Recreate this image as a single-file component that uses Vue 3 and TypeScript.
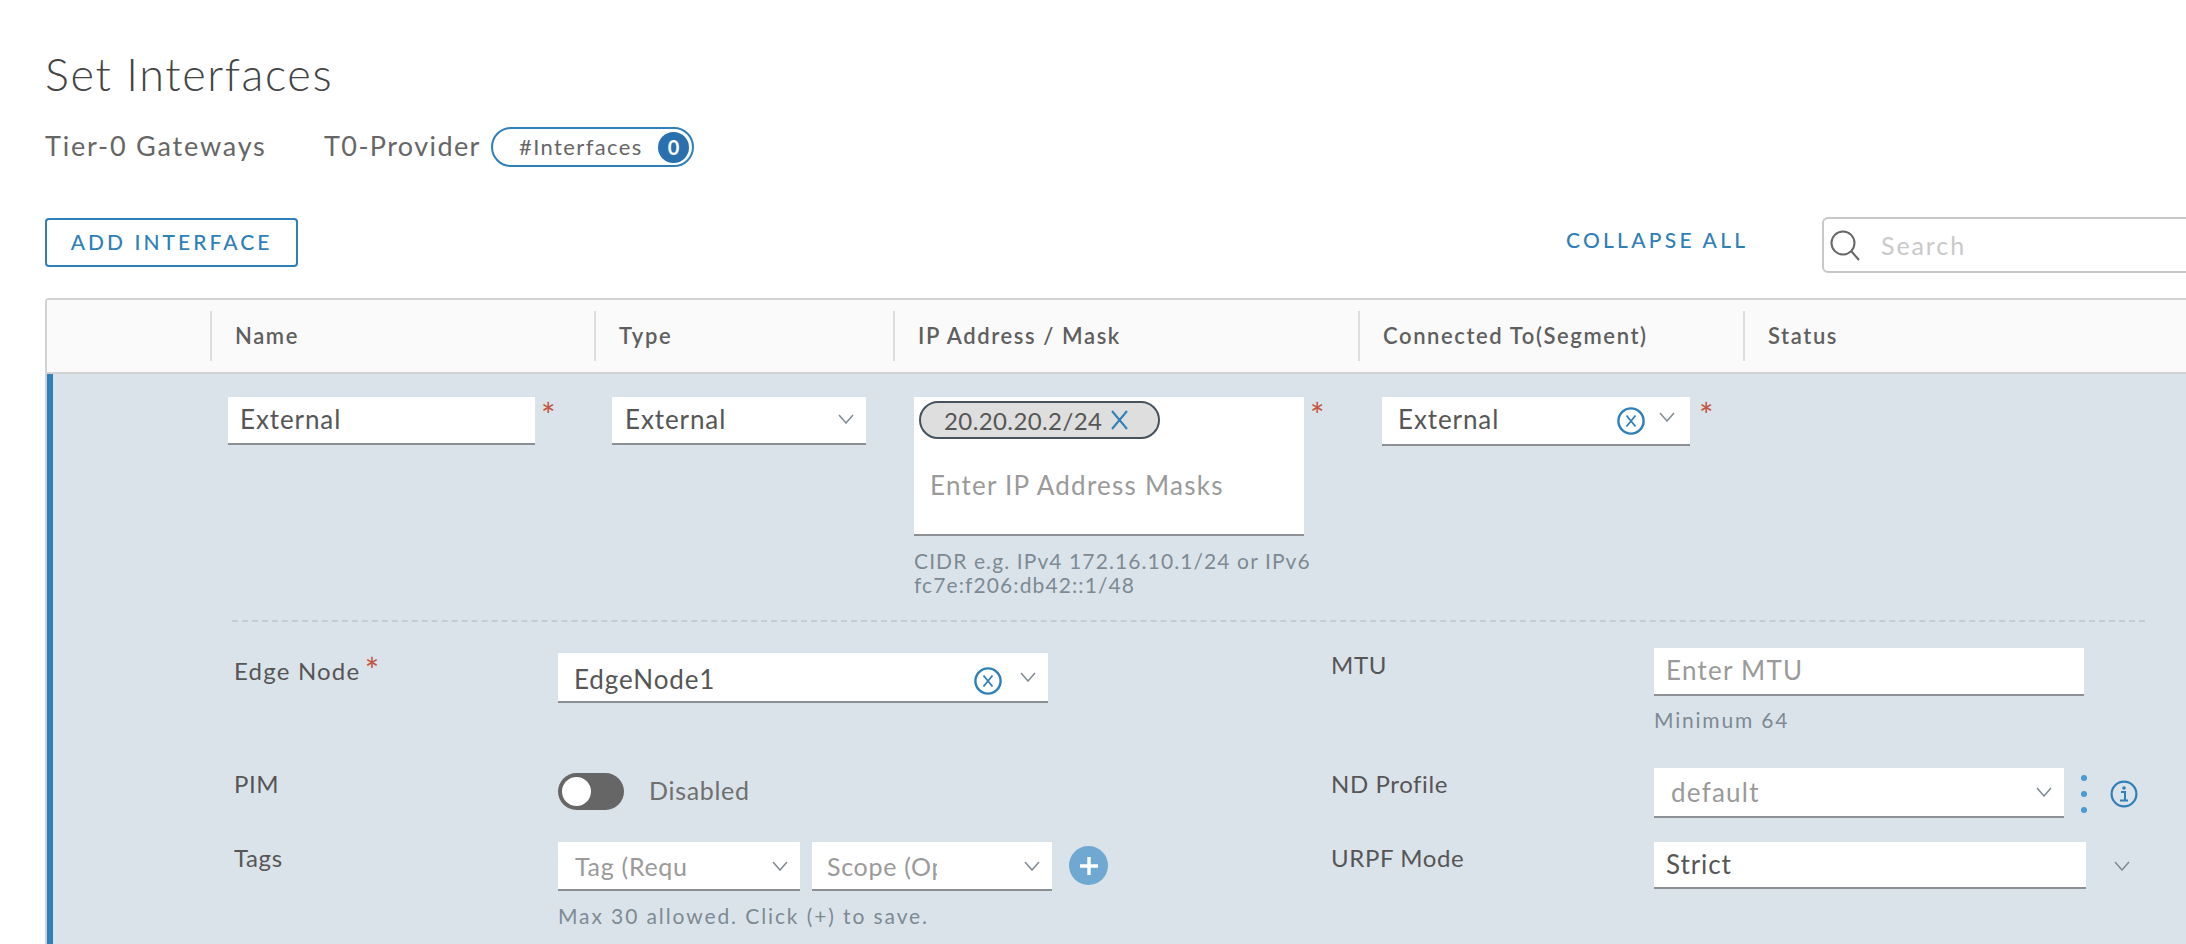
<script setup lang="ts">
const columns = ['', 'Name', 'Type', 'IP Address / Mask', 'Connected To(Segment)', 'Status']
</script>

<template>
  <div class="page">
    <svg class="sprites" width="0" height="0" aria-hidden="true">
      <symbol id="chev" viewBox="0 0 16 10">
        <path d="M1 1L8 9L15 1" fill="none" stroke="#7f8a92" stroke-width="1.5" />
      </symbol>
      <symbol id="clear" viewBox="0 0 28 28">
        <circle cx="14" cy="14" r="12.6" fill="none" stroke="#2f7fb8" stroke-width="2.4" />
        <path d="M9.5 8.5L18.5 19.5M18.5 8.5L9.5 19.5" fill="none" stroke="#2f7fb8" stroke-width="1.8" />
      </symbol>
    </svg>

    <h1 class="title">Set Interfaces</h1>

    <div class="crumbs">
      <span class="crumb-root">Tier-0 Gateways</span>
      <span class="crumb-name">T0-Provider</span>
      <span class="pill">
        <span class="pill-text">#Interfaces</span>
        <span class="pill-count">0</span>
      </span>
    </div>

    <div class="toolbar">
      <button class="btn-add">ADD INTERFACE</button>
      <a class="collapse">COLLAPSE ALL</a>
      <div class="search">
        <svg width="32" height="32" viewBox="0 0 32 32">
          <circle cx="14" cy="14" r="11.5" fill="none" stroke="#666" stroke-width="2" />
          <path d="M22.5 22.5L30 31" fill="none" stroke="#666" stroke-width="2" />
        </svg>
        <span class="search-text">Search</span>
      </div>
    </div>

    <div class="table">
      <div class="thead cols">
        <div v-for="col in columns" :key="col" class="th">
          <span>{{ col }}</span>
        </div>
      </div>

      <div class="row">
        <div class="cols row-main">
          <div></div>
          <div class="cell cell-name">
            <div class="field w-name"><span class="val">External</span></div>
            <span class="star">*</span>
          </div>
          <div class="cell cell-type">
            <div class="field w-type">
              <span class="val">External</span>
              <svg class="chev" width="16" height="10"><use href="#chev" /></svg>
            </div>
          </div>
          <div class="cell cell-ip">
            <div class="ip-wrap">
              <div class="ip-box">
                <span class="chip">
                  20.20.20.2/24
                  <svg class="chip-x" width="17" height="20" viewBox="0 0 17 20">
                    <path d="M1 1L16 19M16 1L1 19" fill="none" stroke="#2f7fb8" stroke-width="2" />
                  </svg>
                </span>
                <span class="ph ip-ph">Enter IP Address Masks</span>
              </div>
              <p class="hint ip-hint">CIDR e.g. IPv4 172.16.10.1/24 or IPv6<br />fc7e:f206:db42::1/48</p>
            </div>
            <span class="star">*</span>
          </div>
          <div class="cell cell-conn">
            <div class="field w-conn">
              <span class="val">External</span>
              <svg class="clear" width="28" height="28"><use href="#clear" /></svg>
              <svg class="chev" width="16" height="10"><use href="#chev" /></svg>
            </div>
            <span class="star">*</span>
          </div>
          <div></div>
        </div>

        <div class="divider"></div>

        <div class="details">
          <div class="lbl lbl-edge">Edge Node <span class="star star-inline">*</span></div>
          <div class="ctrl ctrl-edge">
            <div class="field w-edge">
              <span class="val">EdgeNode1</span>
              <svg class="clear" width="28" height="28"><use href="#clear" /></svg>
              <svg class="chev" width="16" height="10"><use href="#chev" /></svg>
            </div>
          </div>
          <div class="lbl lbl-mtu">MTU</div>
          <div class="ctrl">
            <div class="field w-mtu"><span class="ph">Enter MTU</span></div>
            <p class="hint mtu-hint">Minimum 64</p>
          </div>

          <div class="lbl lbl-pim">PIM</div>
          <div class="ctrl ctrl-pim">
            <span class="toggle"><span class="knob"></span></span>
            <span class="toggle-text">Disabled</span>
          </div>
          <div class="lbl lbl-pim">ND Profile</div>
          <div class="ctrl nd-line">
            <div class="field w-nd">
              <span class="ph">default</span>
              <svg class="chev" width="16" height="10"><use href="#chev" /></svg>
            </div>
            <span class="dots"><i></i><i></i><i></i></span>
            <svg class="info" width="28" height="28" viewBox="0 0 28 28">
              <circle cx="14" cy="14" r="12.4" fill="none" stroke="#2f7fb8" stroke-width="2.2" />
              <circle cx="14" cy="8" r="1.8" fill="#2f7fb8" />
              <path d="M11 12H15V20M10 20.5H18" fill="none" stroke="#2f7fb8" stroke-width="2" />
            </svg>
          </div>

          <div class="lbl lbl-tags">Tags</div>
          <div class="ctrl">
            <div class="tag-line">
              <div class="field w-tag">
                <span class="ph ph-tag">Tag (Requ</span>
                <svg class="chev" width="16" height="10"><use href="#chev" /></svg>
              </div>
              <div class="field w-scope">
                <span class="ph ph-tag ph-clip">Scope (Op</span>
                <svg class="chev" width="16" height="10"><use href="#chev" /></svg>
              </div>
              <span class="plus">
                <svg width="22" height="22" viewBox="0 0 22 22">
                  <path d="M11 2V20M2 11H20" stroke="#fff" stroke-width="3.4" />
                </svg>
              </span>
            </div>
            <p class="hint tag-hint">Max 30 allowed. Click (+) to save.</p>
          </div>
          <div class="lbl lbl-tags">URPF Mode</div>
          <div class="ctrl urpf-line">
            <div class="field w-urpf"><span class="val">Strict</span></div>
            <svg class="chev" width="16" height="10"><use href="#chev" /></svg>
          </div>
        </div>
      </div>
    </div>
  </div>
</template>

<style>
html,
body {
  margin: 0;
  background: #fff;
  overflow: hidden;
}
</style>

<style scoped>
.page {
  width: 2186px;
  height: 944px;
  overflow: hidden;
  box-sizing: border-box;
  padding: 46px 0 0 45px;
  font-family: Lato, "Open Sans", sans-serif;
  color: #565656;
  background: #fff;
}

.sprites {
  position: absolute;
}

.title {
  margin: 0;
  font-size: 45px;
  line-height: 56px;
  font-weight: 300;
  letter-spacing: 1.6px;
  color: #444;
}

.crumbs {
  display: flex;
  align-items: center;
  height: 40px;
  margin-top: 25px;
  font-size: 27px;
  color: #666;
}

.crumb-root {
  width: 279px;
  padding-bottom: 4px;
  letter-spacing: 1.8px;
}

.crumb-name {
  width: 167px;
  padding-bottom: 4px;
  letter-spacing: 1.4px;
}

.pill {
  box-sizing: border-box;
  display: flex;
  align-items: center;
  justify-content: space-between;
  width: 203px;
  height: 40px;
  padding: 0 3px 0 26px;
  border: 2px solid #2f7fb8;
  border-radius: 20px;
  font-size: 22px;
  letter-spacing: 1.4px;
}

.pill-text {
  padding-bottom: 2px;
}

.pill-count {
  box-sizing: border-box;
  width: 31px;
  height: 31px;
  border-radius: 50%;
  background: #2a6fae;
  color: #fff;
  font-size: 20px;
  font-weight: 700;
  line-height: 31px;
  letter-spacing: 0;
  text-align: center;
}

.toolbar {
  display: flex;
  align-items: flex-start;
  width: 2300px;
  height: 56px;
  margin-top: 51px;
}

.btn-add {
  box-sizing: border-box;
  width: 253px;
  height: 49px;
  padding: 0 0 2px;
  border: 2px solid #2f7fb8;
  border-radius: 4px;
  background: #fff;
  color: #2f7fb8;
  font: 500 21px Lato, sans-serif;
  letter-spacing: 3.05px;
}

.collapse {
  margin: 6px 0 0 1268px;
  width: 256px;
  color: #2f7fb8;
  font-size: 21px;
  font-weight: 500;
  line-height: 31px;
  letter-spacing: 3.25px;
}

.search {
  box-sizing: border-box;
  display: flex;
  align-items: center;
  flex: 1;
  height: 56px;
  margin-top: -1px;
  padding-left: 5px;
  border: 2px solid #c8c8c8;
  border-radius: 6px;
}

.search-text {
  margin-left: 20px;
  font-size: 25px;
  letter-spacing: 1.9px;
  color: #c9c9c9;
}

.table {
  width: 2300px;
  margin-top: 24px;
  border-top: 2px solid #d2d2d2;
  border-left: 2px solid #d2d2d2;
  border-top-left-radius: 4px;
}

.cols {
  display: grid;
  grid-template-columns: 163px 384px 299px 465px 385px 1fr;
}

.thead {
  height: 72px;
  align-items: center;
  background: #fafafa;
  border-bottom: 2px solid #d2d2d2;
}

.th {
  box-sizing: border-box;
  height: 50px;
  padding-left: 23px;
  border-left: 2px solid #dedede;
  font-size: 22px;
  font-weight: 600;
  line-height: 50px;
  letter-spacing: 1.6px;
  color: #5f5f5f;
}

.th:first-child {
  border-left: 0;
}

.row {
  height: 600px;
  box-sizing: border-box;
  border-left: 6px solid #2f7fb8;
  background: #dbe3ea;
}

.row-main {
  height: 246px;
  margin-left: -6px;
  padding-top: 23px;
  box-sizing: border-box;
}

.cell {
  display: flex;
  align-items: flex-start;
  gap: 6px;
}

.cell-name,
.cell-type {
  padding-left: 18px;
}

.cell-ip {
  padding-left: 21px;
  gap: 6px;
}

.cell-conn {
  padding-left: 24px;
  gap: 9px;
}

.field {
  box-sizing: border-box;
  display: flex;
  align-items: center;
  flex: none;
  padding: 0 12px 2px 12px;
  background: #fff;
  border-bottom: 2px solid #8c9094;
  font-size: 26px;
}

.val {
  color: #565656;
  letter-spacing: 0.9px;
}

.ph {
  color: #9a9a9a;
  letter-spacing: 1.25px;
}

.ph-tag {
  font-size: 25px;
  letter-spacing: 0.7px;
}

.ph-clip {
  display: block;
  width: 110px;
  overflow: hidden;
  white-space: nowrap;
}

.chev {
  flex: none;
  margin-left: auto;
}

.clear {
  flex: none;
  margin-left: auto;
  margin-top: 4px;
}

.clear + .chev {
  margin-left: 14px;
  margin-top: -4px;
}

.w-name {
  width: 307px;
  height: 48px;
}

.w-type {
  width: 254px;
  height: 48px;
  padding-left: 13px;
}

.w-conn {
  width: 308px;
  height: 49px;
  padding-left: 16px;
  padding-right: 15px;
  padding-bottom: 3px;
}

.w-edge {
  width: 490px;
  height: 50px;
  padding: 3px 12px 0 16px;
}

.w-edge .clear + .chev {
  margin-left: 18px;
}

.w-mtu {
  width: 430px;
  height: 48px;
}

.w-nd {
  width: 410px;
  height: 50px;
  padding-left: 17px;
  padding-bottom: 0;
}

.w-tag {
  width: 242px;
  height: 49px;
  padding-left: 17px;
  padding-bottom: 0;
}

.w-scope {
  width: 240px;
  height: 49px;
  padding-left: 15px;
  padding-bottom: 0;
}

.w-urpf {
  width: 432px;
  height: 47px;
}

.ip-wrap {
  width: 390px;
}

.ip-box {
  box-sizing: border-box;
  width: 390px;
  height: 139px;
  padding: 4px 0 0 5px;
  background: #fff;
  border-bottom: 2px solid #8c9094;
  font-size: 26px;
}

.chip {
  box-sizing: border-box;
  display: flex;
  align-items: center;
  width: 241px;
  height: 38px;
  padding-left: 23px;
  border: 2px solid #46525e;
  border-radius: 19px;
  background: #dedede;
  color: #565656;
  font-size: 24px;
  letter-spacing: 0.4px;
}

.chip-x {
  margin-left: 9px;
}

.ip-ph {
  display: block;
  margin: 30px 0 0 11px;
}

.hint {
  margin: 0;
  font-size: 21px;
  line-height: 24px;
  color: #7d8a94;
  letter-spacing: 1.1px;
}

.ip-hint {
  margin-top: 13px;
  white-space: nowrap;
}

.star {
  margin-top: 3px;
  color: #c4543f;
  font-size: 34px;
  line-height: 30px;
}

.star-inline {
  position: relative;
  top: 3px;
  margin-left: -3px;
  line-height: 20px;
}

.divider {
  width: 1913px;
  margin-left: 179px;
  border-top: 2px dashed #c4ccd3;
}

.details {
  display: grid;
  grid-template-columns: 324px 773px 323px 500px;
  grid-template-rows: 120px 74px 90px;
  margin: 26px 0 0 181px;
}

.lbl {
  padding-top: 8px;
  font-size: 24px;
  line-height: 30px;
  letter-spacing: 0.6px;
  color: #565656;
}

.lbl-edge {
  letter-spacing: 1.2px;
}

.lbl-mtu {
  padding-top: 2px;
}

.lbl-pim,
.lbl-tags {
  padding-top: 1px;
}

.ctrl-edge {
  padding-top: 5px;
}

.ctrl-pim {
  display: flex;
  align-items: center;
  gap: 25px;
  height: 37px;
  padding-top: 5px;
}

.toggle {
  box-sizing: border-box;
  display: block;
  width: 66px;
  height: 37px;
  padding: 4px;
  border-radius: 19px;
  background: #666;
}

.knob {
  display: block;
  width: 29px;
  height: 29px;
  border-radius: 50%;
  background: #fff;
}

.toggle-text {
  padding-bottom: 3px;
  font-size: 25px;
  letter-spacing: 0.7px;
  color: #6f6f6f;
}

.mtu-hint {
  margin-top: 12px;
  letter-spacing: 1.8px;
}

.nd-line {
  display: flex;
  align-items: flex-start;
}

.dots {
  display: flex;
  flex-direction: column;
  gap: 10px;
  margin: 7px 0 0 17px;
}

.dots i {
  display: block;
  width: 6px;
  height: 6px;
  border-radius: 50%;
  background: #4b9bd1;
}

.info {
  margin: 12px 0 0 23px;
}

.tag-line {
  display: flex;
  align-items: flex-start;
  gap: 12px;
}

.plus {
  display: flex;
  align-items: center;
  justify-content: center;
  width: 39px;
  height: 39px;
  margin: 4px 0 0 5px;
  border-radius: 50%;
  background: #6fa8d1;
}

.tag-hint {
  margin-top: 13px;
  letter-spacing: 1.9px;
}

.urpf-line {
  display: flex;
  align-items: flex-start;
}

.urpf-line .chev {
  margin: 19px 0 0 28px;
}
</style>
